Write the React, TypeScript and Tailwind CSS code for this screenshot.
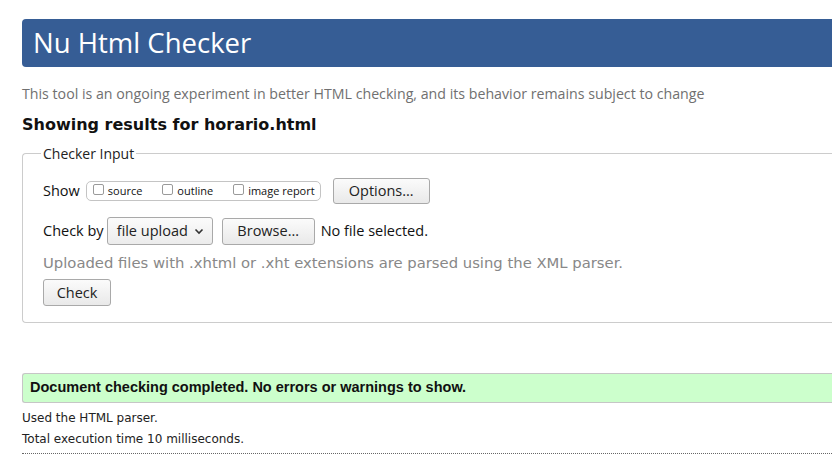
export default function App() {
  return (
    <div className="min-h-[468px] w-[832px] overflow-hidden bg-white pl-[22px] pt-[19px] font-['DejaVu_Sans',sans-serif] text-[#111]">
      <div className="flex h-[48px] w-[830px] items-center rounded-l-[4px] bg-[#365d95] pl-[11px]">
        <h1 className="font-['Open_Sans',sans-serif] text-[27.5px] leading-none text-white">Nu Html Checker</h1>
      </div>

      <p className="mt-[18px] font-['Open_Sans',sans-serif] text-[14.2px] leading-[18px] text-[#707070]">
        This tool is an ongoing experiment in better HTML checking, and its behavior remains subject to change
      </p>
      <h2 className="mt-[12px] text-[16px] font-bold leading-[20px] text-[#111]">Showing results for horario.html</h2>

      <fieldset className="mt-[8px] w-[830px] rounded-l-[4px] border border-r-0 border-[#cccccc] pb-[16px] pl-[20px] pt-[14px] font-['Open_Sans',sans-serif]">
        <legend className="ml-[-2px] px-[2px] text-[14px] text-[#222]">Checker Input</legend>

        <div className="flex items-center text-[14.5px]">
          <span className="mr-[6px]">Show</span>
          <div className="flex h-[20px] items-center rounded-[5px] border border-[#c4c4c4] pl-[6px] pr-[5px] text-[11px]">
            <label className="flex items-center">
              <span className="mb-[3px] h-[11px] w-[11px] rounded-[2px] border border-[#9a9a9a] bg-white" />
              <span className="ml-[4px]">source</span>
            </label>
            <label className="ml-[20px] flex items-center">
              <span className="mb-[3px] h-[11px] w-[11px] rounded-[2px] border border-[#9a9a9a] bg-white" />
              <span className="ml-[4px]">outline</span>
            </label>
            <label className="ml-[20px] flex items-center">
              <span className="mb-[3px] h-[11px] w-[11px] rounded-[2px] border border-[#9a9a9a] bg-white" />
              <span className="ml-[4px]">image report</span>
            </label>
          </div>
          <button className="ml-[12px] h-[26px] w-[97px] rounded-[3px] border border-[#a9a9a9] bg-gradient-to-b from-[#fbfbfb] to-[#e9e9e9] text-[14.5px] text-[#222]">
            Options…
          </button>
        </div>

        <div className="mt-[13px] flex items-center text-[14.5px]">
          <span className="mr-[3px]">Check by</span>
          <div className="flex h-[28px] w-[106px] items-center justify-between rounded-[3px] border border-[#a9a9a9] bg-gradient-to-b from-[#fbfbfb] to-[#ececec] pl-[9px] pr-[8px] text-[#222]">
            <span>file upload</span>
            <svg width="10" height="7" viewBox="0 0 10 7" className="mt-[1px]">
              <path d="M1.5 1.5 L5 5 L8.5 1.5" fill="none" stroke="#333" strokeWidth="1.6" />
            </svg>
          </div>
          <button className="ml-[9px] h-[27px] w-[93px] rounded-[3px] border border-[#a9a9a9] bg-gradient-to-b from-[#fbfbfb] to-[#e9e9e9] text-[14.5px] text-[#222]">
            Browse…
          </button>
          <span className="ml-[6px] text-[#111]">No file selected.</span>
        </div>

        <p className="mt-[9px] font-['DejaVu_Sans',sans-serif] text-[14.8px] leading-[18px] text-[#888]">
          Uploaded files with .xhtml or .xht extensions are parsed using the XML parser.
        </p>

        <button className="mt-[7px] h-[27px] w-[68px] rounded-[3px] border border-[#a9a9a9] bg-gradient-to-b from-[#fbfbfb] to-[#e9e9e9] text-[14.5px] text-[#222]">
          Check
        </button>
      </fieldset>

      <div className="mt-[50px] flex h-[30px] w-[830px] items-center rounded-l-[3px] border border-r-0 border-[#c6c6c6] bg-[#ccffcc] pl-[7px] font-['Liberation_Sans',sans-serif] text-[14.5px] font-bold text-[#111]">
        Document checking completed. No errors or warnings to show.
      </div>

      <p className="mt-[7px] text-[12px] leading-[16px] text-[#222]">Used the HTML parser.</p>
      <p className="mt-[5px] text-[12px] leading-[16px] text-[#222]">Total execution time 10 milliseconds.</p>
      <div className="mt-[6px] w-[830px] border-t border-dotted border-[#666]" />
    </div>
  );
}
